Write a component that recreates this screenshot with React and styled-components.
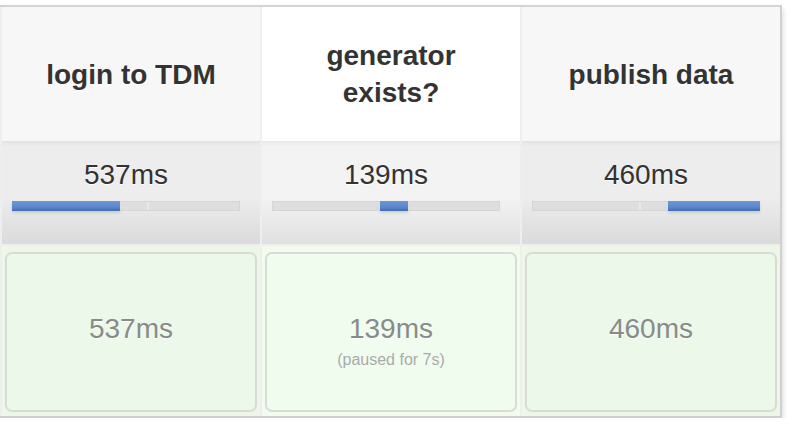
import React from "react";
import styled, { createGlobalStyle } from "styled-components";

const GlobalStyle = createGlobalStyle`
  body {
    margin: 0;
    background: #fff;
    font-family: "Liberation Sans", Arial, Helvetica, sans-serif;
  }
`;

const stages = [
  { name: "login to TDM", ms: 537 },
  { name: "generator exists?", ms: 139, paused: "7s", hover: true },
  { name: "publish data", ms: 460 },
];

const TRACK = 228;

const Page = styled.div`
  padding-top: 5px;
`;

const Table = styled.div`
  width: 778px;
  display: grid;
  grid-template-columns: repeat(3, 1fr);
  gap: 2px;
  padding-left: 2px;
  background: #eeeeee;
  border-top: 2px solid #d3d3d3;
  border-right: 2px solid #d0d0d0;
  border-bottom: 2px solid #cfcfcf;
  box-shadow: 0 4px 6px rgba(0, 0, 0, 0.2);
`;

const Column = styled.div`
  display: flex;
  flex-direction: column;
`;

const Header = styled.div`
  height: 134px;
  display: flex;
  align-items: center;
  justify-content: center;
  text-align: center;
  padding: 0 40px;
  background: ${p => (p.hover ? "#ffffff" : "#f7f7f7")};
  color: #333;
  font-size: 28px;
  font-weight: bold;
  line-height: 37px;
  text-shadow: 0 1px 0 #fff;
`;

const Avg = styled.div`
  height: 103px;
  padding: 18px 20px 0 10px;
  box-sizing: border-box;
  background: ${p =>
    p.hover
      ? "linear-gradient(to bottom, #e8e8e8 0, #f3f3f3 5px, #f3f3f3 55%, #e0e0e0 100%)"
      : "linear-gradient(to bottom, #e2e2e2 0, #ededed 5px, #ededed 55%, #dadada 100%)"};
`;

const AvgTime = styled.div`
  text-align: center;
  font-size: 28px;
  line-height: 32px;
  color: #333;
  text-shadow: 0 1px 0 #fff;
`;

const Track = styled.div`
  position: relative;
  margin-top: 10px;
  width: ${TRACK}px;
  height: 10px;
  background: #dedede;
  box-shadow: inset 0 0 0 1px #d6d6d6;
`;

const Notch = styled.div`
  position: absolute;
  top: 1px;
  bottom: 1px;
  width: 2px;
  background: #e9e9e9;
`;

const Fill = styled.div`
  position: absolute;
  top: 0;
  bottom: 0;
  background: linear-gradient(to bottom, #6c98d8 0, #5b87cc 60%, #3f6db5 100%);
  box-shadow: 0 2px 3px rgba(0, 0, 0, 0.12);
`;

const Cell = styled.div`
  margin-top: 2px;
  height: 170px;
  padding: 6px 3px 4px;
  box-sizing: border-box;
  background: ${p => (p.hover ? "#f1fcef" : "#ecf7e8")};
`;

const Box = styled.div`
  height: 100%;
  box-sizing: border-box;
  border: 2px solid #d8dcd6;
  border-radius: 7px;
  padding-top: 59px;
  text-align: center;
  background: ${p => (p.hover ? "#f0fdee" : "#ecf8e9")};
`;

const Duration = styled.div`
  font-size: 28px;
  line-height: 32px;
  color: #888c88;
  text-shadow: 0 1px 0 #fff;
`;

const Paused = styled.div`
  margin-top: 5px;
  font-size: 16px;
  line-height: 20px;
  color: #aaaaaa;
`;

const App = () => {
  const total = stages.reduce((s, x) => s + x.ms, 0);
  let acc = 0;
  const spans = stages.map(s => {
    const start = (acc / total) * TRACK;
    acc += s.ms;
    return { start, width: (s.ms / total) * TRACK };
  });
  const bounds = spans.slice(0, -1).map(s => s.start + s.width);

  return (
    <Page>
      <GlobalStyle />
      <Table>
        {stages.map((s, i) => (
          <Column key={s.name}>
            <Header hover={s.hover}>{s.name}</Header>
            <Avg hover={s.hover}>
              <AvgTime>{s.ms}ms</AvgTime>
              <Track>
                {bounds.map(b => (
                  <Notch key={b} style={{ left: b - 1 }} />
                ))}
                <Fill style={{ left: spans[i].start, width: spans[i].width }} />
              </Track>
            </Avg>
            <Cell hover={s.hover}>
              <Box hover={s.hover}>
                <Duration>{s.ms}ms</Duration>
                {s.paused && <Paused>(paused for {s.paused})</Paused>}
              </Box>
            </Cell>
          </Column>
        ))}
      </Table>
    </Page>
  );
};

export default App;
